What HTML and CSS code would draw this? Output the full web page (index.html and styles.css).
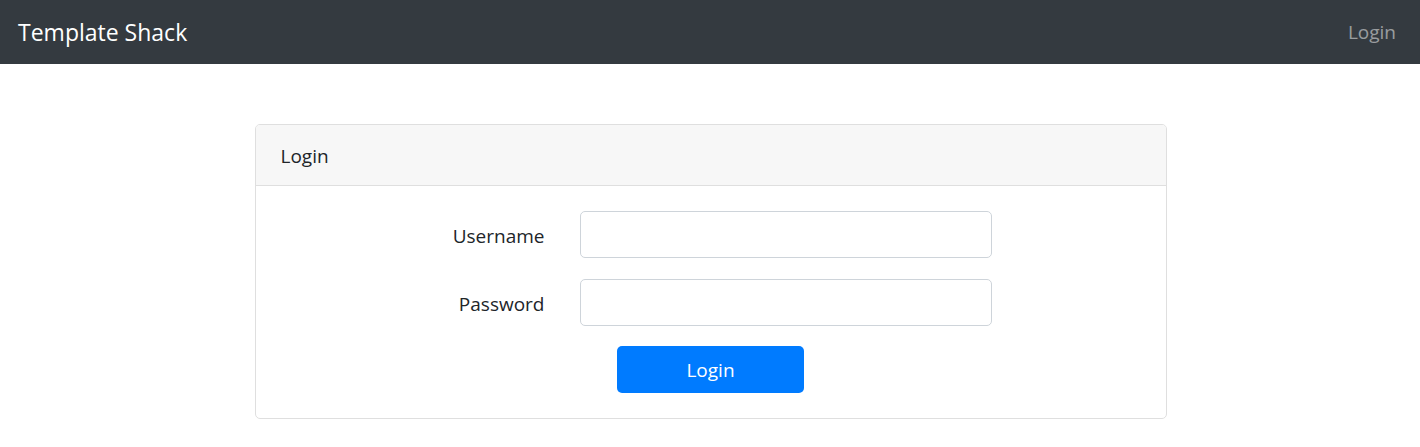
FILE: index.html
```html
<!DOCTYPE html>
<html lang="en">
<head>
<meta charset="utf-8">
<title>Template Shack</title>
<link rel="stylesheet" href="styles.css">
</head>
<body>
<nav class="navbar">
  <a class="brand" href="#">Template Shack</a>
  <a class="nav-link" href="#">Login</a>
</nav>
<main class="main">
  <div class="card">
    <div class="card-header">Login</div>
    <div class="card-body">
      <form class="form">
        <div class="form-row">
          <label class="form-label" for="username">Username</label>
          <input class="form-input" type="text" id="username">
        </div>
        <div class="form-row form-row-next">
          <label class="form-label" for="password">Password</label>
          <input class="form-input" type="password" id="password">
        </div>
        <div class="form-actions">
          <button class="btn" type="button">Login</button>
        </div>
      </form>
    </div>
  </div>
</main>
</body>
</html>
```

FILE: styles.css
```css
* { box-sizing: border-box; }
html, body { margin: 0; padding: 0; }
body {
  font-family: "Open Sans", "Noto Sans", sans-serif;
  font-size: 19px;
  line-height: 30px;
  color: #212529;
  background: #fff;
}
.navbar {
  height: 64px;
  background: #343a40;
  display: flex;
  align-items: center;
  justify-content: space-between;
  padding: 0 24px 0 18px;
}
.brand {
  color: #fff;
  text-decoration: none;
  font-size: 23px;
  line-height: 36px;
  margin-top: -1px;
}
.nav-link {
  color: rgba(255, 255, 255, 0.5);
  text-decoration: none;
  font-size: 19px;
  margin-top: -1px;
}
.main {
  display: flex;
  justify-content: center;
  padding: 60px 0 0 1px;
}
.card {
  width: 912px;
  border: 1px solid #dfdfdf;
  border-radius: 5px;
  overflow: hidden;
}
.card-header {
  background: #f7f7f7;
  border-bottom: 1px solid #dfdfdf;
  padding: 16px 25px 14px;
  height: 61px;
}
.card-body {
  padding: 25px;
}
.form {
  display: flex;
  flex-direction: column;
  gap: 20px;
}
.form-row {
  display: grid;
  grid-template-columns: 264px 412px;
  column-gap: 35px;
  align-items: center;
  height: 47px;
}
.form-row-next {
  margin-top: 1px;
}
.form-label {
  text-align: right;
  padding-top: 2px;
}
.form-input {
  height: 47px;
  border: 1px solid #ced4da;
  border-radius: 5px;
  font: inherit;
  padding: 0 15px;
  margin: 0;
}
.form-actions {
  display: flex;
  justify-content: center;
}
.btn {
  width: 187px;
  height: 47px;
  background: #007bff;
  color: #fff;
  border: none;
  border-radius: 5px;
  font: inherit;
  padding: 0;
}
```
